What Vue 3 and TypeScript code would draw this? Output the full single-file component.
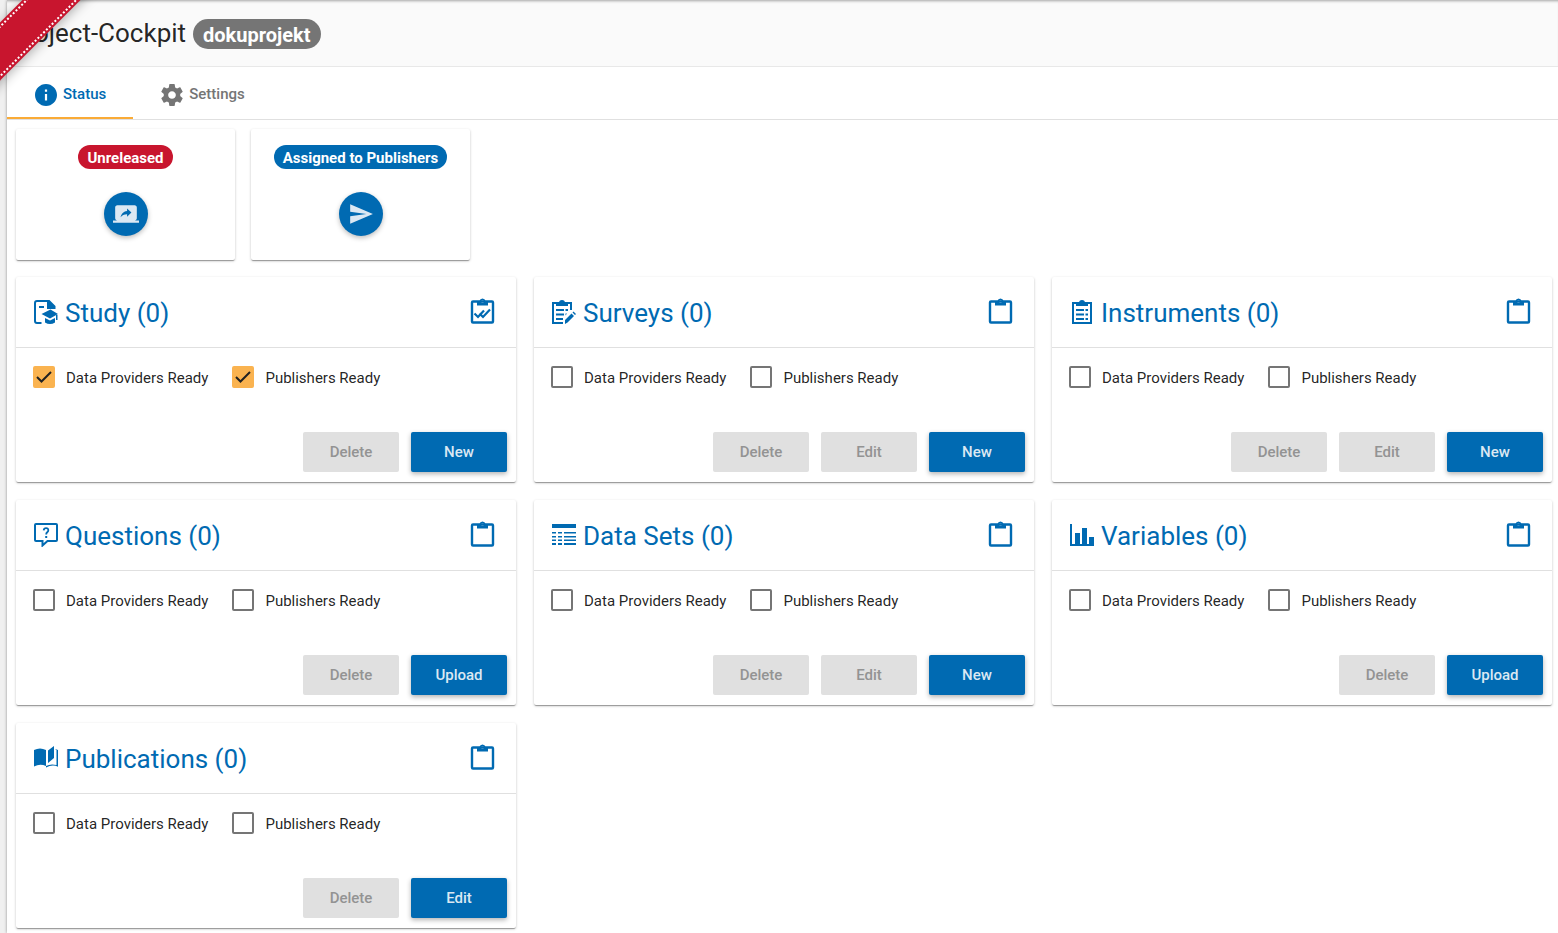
<script setup lang="ts">
import { ref } from 'vue'

type IconName = 'study' | 'surveys' | 'instruments' | 'questions' | 'dataSets' | 'variables' | 'publications'

interface Action {
  label: string
  disabled?: boolean
}

interface Card {
  id: IconName
  title: string
  providersReady: boolean
  publishersReady: boolean
  actions: Action[]
}

const remove: Action = { label: 'Delete', disabled: true }
const lockedEdit: Action = { label: 'Edit', disabled: true }
const create: Action = { label: 'New' }
const upload: Action = { label: 'Upload' }

const cards = ref<Card[]>([
  { id: 'study', title: 'Study (0)', providersReady: true, publishersReady: true, actions: [remove, create] },
  { id: 'surveys', title: 'Surveys (0)', providersReady: false, publishersReady: false, actions: [remove, lockedEdit, create] },
  { id: 'instruments', title: 'Instruments (0)', providersReady: false, publishersReady: false, actions: [remove, lockedEdit, create] },
  { id: 'questions', title: 'Questions (0)', providersReady: false, publishersReady: false, actions: [remove, upload] },
  { id: 'dataSets', title: 'Data Sets (0)', providersReady: false, publishersReady: false, actions: [remove, lockedEdit, create] },
  { id: 'variables', title: 'Variables (0)', providersReady: false, publishersReady: false, actions: [remove, upload] },
  { id: 'publications', title: 'Publications (0)', providersReady: false, publishersReady: false, actions: [remove, { label: 'Edit' }] },
])
</script>

<template>
  <div class="shell">
    <div class="ribbon" aria-hidden="true"></div>
    <main class="page">
      <header class="topbar">
        <h1 class="page-title">Project-Cockpit</h1>
        <span class="project">dokuprojekt</span>
      </header>

      <nav class="tabs" role="tablist">
        <button class="tab active" role="tab" aria-selected="true" type="button">
          <svg class="tab-icon" viewBox="2 2 20 20"><path d="M12 2C6.48 2 2 6.48 2 12s4.480 10 10 10 10-4.480 10-10S17.520 2 12 2zm1 15h-2v-6h2v6zm0-8h-2V7h2v2z" /></svg>
          <span>Status</span>
        </button>
        <button class="tab" role="tab" aria-selected="false" type="button">
          <svg class="tab-icon" viewBox="2 2 20 20"><path d="M19.430 12.980c.04-.32.07-.64.07-.98s-.03-.66-.07-.98l2.110-1.650c.19-.15.24-.42.12-.64l-2-3.460c-.12-.22-.39-.3-.61-.22l-2.490 1c-.52-.4-1.080-.73-1.690-.98l-.38-2.650C14.460 2.180 14.250 2 14 2h-4c-.25 0-.46.18-.49.42l-.38 2.650c-.61.25-1.170.59-1.690.98l-2.490-1c-.23-.09-.49 0-.61.22l-2 3.460c-.13.22-.07.49.12.64l2.110 1.650c-.04.32-.07.65-.07.98s.03.66.07.98l-2.110 1.650c-.19.15-.24.42-.12.64l2 3.460c.12.22.39.3.61.22l2.490-1c.52.4 1.080.73 1.690.98l.38 2.650c.03.24.24.42.49.42h4c.25 0 .46-.18.49-.42l.38-2.650c.61-.25 1.170-.59 1.690-.98l2.490 1c.23.09.49 0 .61-.22l2-3.460c.12-.22.07-.49-.12-.64l-2.110-1.650zM12 15.500c-1.930 0-3.500-1.570-3.500-3.500s1.570-3.500 3.500-3.500 3.500 1.570 3.500 3.500-1.570 3.500-3.500 3.500z" /></svg>
          <span>Settings</span>
        </button>
      </nav>

      <section class="states">
        <article class="state paper">
          <span class="badge red">Unreleased</span>
          <button class="round" type="button" aria-label="Release project">
            <svg viewBox="0 0 24 24"><path d="M20 18c1.100 0 1.990-.9 1.990-2L22 6c0-1.110-.9-2-2-2H4c-1.110 0-2 .89-2 2v10c0 1.100.89 2 2 2H0v2h24v-2h-4zm-7-3.530v-2.190c-2.780 0-4.610.85-6 2.720.56-2.670 2.110-5.330 6-5.870V7l4 3.730-4 3.740z" /></svg>
          </button>
        </article>
        <article class="state paper">
          <span class="badge blue">Assigned to Publishers</span>
          <button class="round" type="button" aria-label="Assign project">
            <svg viewBox="0 0 24 24"><path d="M2.010 21L23 12 2.010 3 2 10l15 2-15 2z" /></svg>
          </button>
        </article>
      </section>

      <section class="cards">
        <article v-for="card in cards" :key="card.id" class="card paper">
          <header class="card-head">
            <svg class="card-icon" viewBox="0 0 24 24">
              <template v-if="card.id === 'study'">
                <path d="M7.500 23H3a2 2 0 0 1-2-2V3a2 2 0 0 1 2-2h12" fill="none" stroke="currentColor" stroke-width="2" />
                <path d="M13 0h2.500L21.500 6v3H13zM5 6h5v2H5zM7.500 14l9-4.500 7.500 4.500-8 4.500zM11 18l5 2.500 5-2.500v4.500q-5 3-10 0zM22 15h1.500v5H22z" />
              </template>
              <template v-else-if="card.id === 'surveys'">
                <path d="M11 23H1V3h18v7" fill="none" stroke="currentColor" stroke-width="2" />
                <path d="M4 3h3a3 3 0 0 1 6 0h3v3H4zM4 9h8v2H4zM13.500 9H16v2h-2.500zM4 13.500h8v2H4zM13.500 13.500H15l-1.500 2zM4 18h7v2H4zM13 20l6.500-6.500 2.500 2.500-6.500 6.500L13 24zM20.500 12.500l1-1 2.500 2.500-1 1z" />
              </template>
              <template v-else-if="card.id === 'instruments'">
                <path d="M3 3h18v20H3z" fill="none" stroke="currentColor" stroke-width="2" />
                <path d="M6 3h3a3 3 0 0 1 6 0h3v3H6zM6 9h8v2H6zM15.500 9H18v2h-2.500zM6 13.500h8v2H6zM15.500 13.500H18v2h-2.500zM6 18h8v2H6zM15.500 18H18v2h-2.500z" />
              </template>
              <template v-else-if="card.id === 'questions'">
                <path d="M2 1h20a1 1 0 0 1 1 1v15a1 1 0 0 1-1 1h-8.500L8.500 22.500V18H2a1 1 0 0 1-1-1V2a1 1 0 0 1 1-1z" fill="none" stroke="currentColor" stroke-width="2" />
                <path d="M9.700 7.300Q9.900 5.200 12.100 5.200T14.300 7.200Q14.300 8.300 13.200 9.200T12.200 11.500" fill="none" stroke="currentColor" stroke-width="1.800" />
                <path d="M11.200 13h2v2h-2z" />
              </template>
              <path v-else-if="card.id === 'dataSets'" d="M0 1h24v4H0zM0 9h4v1.500H0zM6 9h4v1.500H6zM12 9h12v1.500H12zM0 13h4v1.500H0zM6 13h4v1.500H6zM12 13h12v1.500H12zM0 16.500h4V18H0zM6 16.500h4V18H6zM12 16.500h12V18H12zM0 20h4v2H0zM6 20h4v2H6zM12 20h12v2H12z" />
              <path v-else-if="card.id === 'variables'" d="M0 1h2v20h3V10h5v11h2V5h5v16h2v-7h5v9H0z" />
              <path v-else d="M0 4Q6 .8 12 4v16Q6 17.300 0 20.500zM14 4.500L20 0v12l-6 5zM21 3.200h1l2.300 1V21q-5.500-3-12.300.5V20q4.500-2.500 10.500-1V4z" />
            </svg>
            <h2 class="card-title">{{ card.title }}</h2>
            <svg class="clip" viewBox="0 0 25 26">
              <rect x="2" y="3.500" width="21" height="21" rx="1" fill="none" stroke="currentColor" stroke-width="2.400" />
              <path fill-rule="evenodd" d="M7 3h2.500a3.050 3.050 0 0 1 6 0H18v4.600H7zM12.500 2.300a1.400 1.400 0 1 0 0 2.800 1.400 1.400 0 0 0 0-2.800z" />
              <path v-if="card.id === 'study'" d="M4.500 15.500l3.500 3.500 6-6.500M9.500 15.500l3.500 3.500 7-7.500" fill="none" stroke="currentColor" stroke-width="2.200" />
            </svg>
          </header>
          <div class="card-body">
            <div class="checks">
              <label class="check">
                <span class="box">
                  <input v-model="card.providersReady" type="checkbox" />
                  <svg v-if="card.providersReady" viewBox="0 0 22 22"><path d="M4 11l4.500 4.500L18 6" /></svg>
                </span>
                <span class="check-text">Data Providers Ready</span>
              </label>
              <label class="check">
                <span class="box">
                  <input v-model="card.publishersReady" type="checkbox" />
                  <svg v-if="card.publishersReady" viewBox="0 0 22 22"><path d="M4 11l4.500 4.500L18 6" /></svg>
                </span>
                <span class="check-text">Publishers Ready</span>
              </label>
            </div>
            <div class="actions">
              <button v-for="action in card.actions" :key="action.label" class="action" type="button" :disabled="action.disabled">{{ action.label }}</button>
            </div>
          </div>
        </article>
      </section>
    </main>
  </div>
</template>

<style>
body {
  margin: 0;
  background: #fff;
}
</style>

<style scoped>
.shell {
  position: relative;
  box-sizing: border-box;
  min-height: 100vh;
  overflow: hidden;
  padding-left: 7px;
  background: #f0f0f0;
  color: rgba(0, 0, 0, 0.87);
  font: 15px/20px Roboto, sans-serif;
}
.shell svg {
  display: block;
  fill: currentColor;
  flex: none;
}
.page {
  min-height: 100vh;
  background: #fff;
  box-shadow: 0 0 3px rgba(0, 0, 0, 0.4);
}
.ribbon {
  position: absolute;
  z-index: 2;
  top: 5px;
  left: -74px;
  box-sizing: border-box;
  width: 200px;
  height: 41px;
  padding: 2px 0;
  background: #c8152e;
  box-shadow: 0 2px 12px rgba(0, 0, 0, 0.3);
  transform: rotate(-45deg);
}
.ribbon::before {
  content: '';
  display: block;
  box-sizing: border-box;
  height: 37px;
  border: dotted #fff;
  border-width: 2px 0;
}
.topbar {
  display: flex;
  align-items: center;
  gap: 7px;
  box-sizing: border-box;
  height: 67px;
  padding: 0 2px;
  background: #fafafa;
  border-bottom: 1px solid #e8e8e8;
  box-shadow: inset 0 3px 3px -2px rgba(0, 0, 0, 0.35);
}
.page-title {
  margin: 0;
  font-size: 26px;
  line-height: 32px;
  font-weight: 400;
}
.project {
  margin-top: 2px;
  padding: 2px 10px 0;
  border-radius: 15px;
  background: #757575;
  color: #fff;
  font-size: 20px;
  line-height: 28px;
  font-weight: 700;
}
.tabs {
  display: flex;
  height: 52px;
  border-bottom: 1px solid #e0e0e0;
}
.tab {
  display: flex;
  align-items: center;
  gap: 6px;
  padding: 4px 27px 0 28px;
  border: 0;
  border-bottom: 2px solid transparent;
  background: none;
  color: #757575;
  font: 500 15px/20px Roboto, sans-serif;
}
.tab.active {
  border-color: #faab36;
  color: #006ab2;
}
.tab-icon {
  width: 22px;
  height: 22px;
  padding-top: 2px;
}
.paper {
  border-radius: 2px;
  background: #fff;
  box-shadow: 0 1px 3px rgba(0, 0, 0, 0.2), 0 1px 1px rgba(0, 0, 0, 0.14), 0 2px 1px -1px rgba(0, 0, 0, 0.2);
}
.states {
  display: flex;
  gap: 16px;
  padding: 9px 9px 0;
}
.state {
  display: flex;
  flex-direction: column;
  align-items: center;
  gap: 23px;
  box-sizing: border-box;
  width: 219px;
  padding: 16px 0 24px;
}
.badge {
  padding: 2px 9px 0;
  border-radius: 12px;
  color: #fff;
  font-weight: 700;
  line-height: 22px;
  white-space: nowrap;
}
.red {
  background: #c8152e;
}
.blue {
  background: #006ab2;
}
.round {
  display: grid;
  place-items: center;
  width: 44px;
  height: 44px;
  padding: 0;
  border: 0;
  border-radius: 50%;
  background: #006ab2;
  color: #dbe8f3;
  box-shadow: 0 2px 5px rgba(0, 0, 0, 0.26);
}
.round svg {
  width: 26px;
  height: 26px;
}
.cards {
  display: grid;
  grid-template-columns: repeat(3, 1fr);
  gap: 18px;
  padding: 17px 6px 5px 9px;
}
.card-head {
  display: flex;
  align-items: center;
  height: 70px;
  padding: 0 21px 0 18px;
  border-bottom: 1px solid #e0e0e0;
  color: #006ab2;
}
.card-icon {
  width: 24px;
  height: 24px;
}
.card-title {
  flex: 1;
  margin: 0 0 0 7px;
  padding-top: 2px;
  font-size: 26px;
  line-height: 32px;
  font-weight: 400;
}
.clip {
  width: 25px;
  height: 26px;
  padding-bottom: 2px;
}
.card-body {
  display: flex;
  flex-direction: column;
  gap: 44px;
  padding: 18px 9px 10px 17px;
}
.checks {
  display: flex;
  gap: 24px;
}
.check {
  display: flex;
  align-items: center;
  gap: 11px;
}
.check-text {
  padding-top: 2px;
}
.box {
  display: grid;
}
.box > * {
  grid-area: 1 / 1;
}
.box input {
  appearance: none;
  box-sizing: border-box;
  width: 22px;
  height: 22px;
  margin: 0;
  border: 2px solid #757575;
  border-radius: 2px;
}
.box input:checked {
  border-color: #fab350;
  background: #fab350;
}
.box svg {
  width: 22px;
  height: 22px;
  fill: none;
  stroke: #212121;
  stroke-width: 2;
  pointer-events: none;
}
.actions {
  display: flex;
  justify-content: flex-end;
  gap: 12px;
}
.action {
  width: 96px;
  height: 40px;
  padding: 0;
  border: 0;
  border-radius: 2px;
  background: #006ab2;
  color: #dbe8f3;
  font: 500 15px/20px Roboto, sans-serif;
  box-shadow: 0 2px 5px rgba(0, 0, 0, 0.3);
}
.action:disabled {
  background: #e0e0e0;
  color: #939393;
  box-shadow: none;
}
</style>
